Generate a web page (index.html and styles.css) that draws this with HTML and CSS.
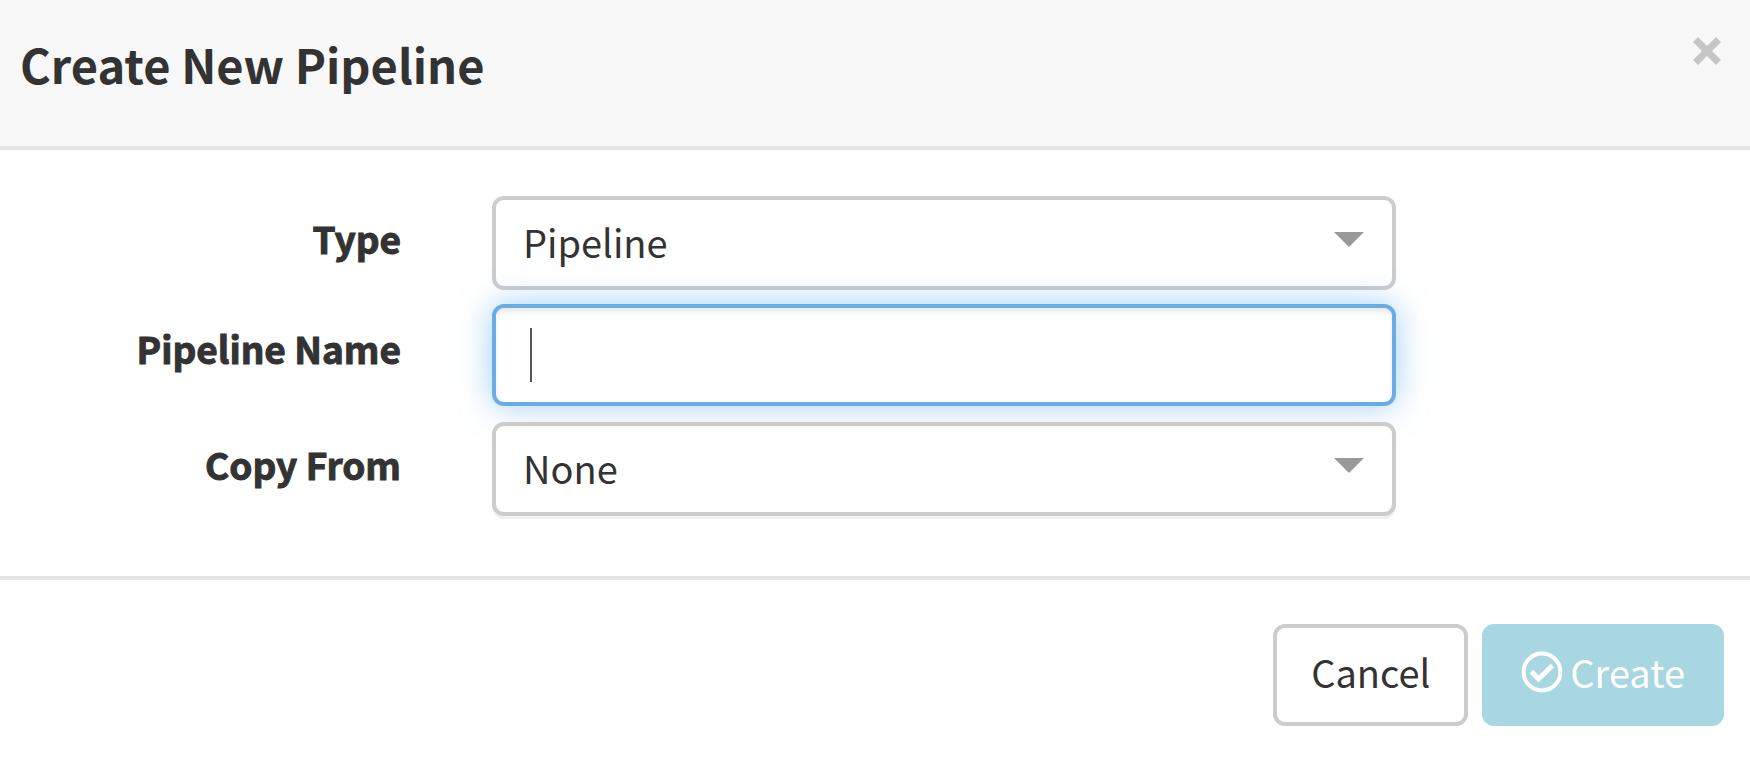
FILE: index.html
```
<!DOCTYPE html>
<html lang="en">
<head>
<meta charset="utf-8">
<title>Create New Pipeline</title>
<link rel="stylesheet" href="styles.css">
</head>
<body>
<form class="modal">
  <header class="modal-header">
    <h1 class="modal-title">Create New Pipeline</h1>
    <button class="close" type="button" aria-label="Close">
      <svg class="close-icon" viewBox="0 0 28 28" aria-hidden="true"><path d="M5 0 14 9 23 0 28 5 19 14 28 23 23 28 14 19 5 28 0 23 9 14 0 5Z"/></svg>
    </button>
  </header>
  <div class="modal-body">
    <div class="row">
      <label class="label" for="type">Type</label>
      <div class="field">
        <select class="control select" id="type"><option>Pipeline</option></select>
        <svg class="arrow" viewBox="0 0 30 15" aria-hidden="true"><path d="M0 0H30L15 15Z"/></svg>
      </div>
    </div>
    <div class="row row-text">
      <label class="label" for="name">Pipeline Name</label>
      <div class="field">
        <input class="control input" id="name" type="text">
      </div>
    </div>
    <div class="row">
      <label class="label" for="copy">Copy From</label>
      <div class="field">
        <select class="control select raised" id="copy"><option>None</option></select>
        <svg class="arrow" viewBox="0 0 30 15" aria-hidden="true"><path d="M0 0H30L15 15Z"/></svg>
      </div>
    </div>
  </div>
  <footer class="modal-footer">
    <button class="btn" type="button">Cancel</button>
    <button class="btn btn-primary" type="submit" disabled>
      <svg class="check" viewBox="0 0 42 42" aria-hidden="true"><circle cx="21" cy="21" r="18.4"/><path d="m10.500 20.500 7 7.500 14-13.500"/></svg>
      <span>Create</span>
    </button>
  </footer>
</form>
</body>
</html>
```

FILE: styles.css
```
* {
  box-sizing: border-box;
}

body {
  margin: 0;
  background: #fff;
  color: #333;
  font-family: "Noto Sans CJK SC", "Noto Sans", sans-serif;
  font-size: 38px;
  line-height: 54px;
}

button,
input,
select {
  font: inherit;
  color: inherit;
}

.modal-header {
  display: flex;
  justify-content: space-between;
  align-items: flex-start;
  padding: 30px 29px 48px 20px;
  background: #f8f8f8;
  border-bottom: 4px solid #e5e5e5;
}

.modal-title {
  margin: 0;
  font-size: 47px;
  font-weight: 600;
  line-height: 68px;
}

.close {
  display: flex;
  margin-top: 7px;
  padding: 0;
  border: 0;
  background: none;
}

.close-icon {
  width: 28px;
  height: 28px;
  fill: #c6c6c6;
}

.modal-body {
  display: flex;
  flex-direction: column;
  gap: 14px;
  padding: 46px 0 60px;
}

.row {
  display: grid;
  grid-template-columns: 492fr 904fr 354fr;
  align-items: center;
}

.row-text {
  padding-bottom: 2px;
}

.label {
  padding: 0 91px 10px 0;
  font-size: 37px;
  font-weight: 700;
  text-align: right;
  -webkit-text-stroke: 1px #333;
}

.row-text .label {
  padding-bottom: 14px;
}

.field {
  position: relative;
}

.control {
  display: block;
  width: 100%;
  height: 94px;
  padding: 0 27px 2px;
  border: 4px solid #ccc;
  border-radius: 12px;
  background: #fff;
  outline: 0;
}

.select {
  appearance: none;
}

.raised {
  box-shadow: 0 3px 0 #efefef;
}

.arrow {
  position: absolute;
  top: 36px;
  right: 32px;
  width: 30px;
  height: 15px;
  fill: #999;
  pointer-events: none;
}

/* Focused text box, with its insertion bar at the start of the text */
.input {
  position: relative;
  height: 102px;
  padding: 0 34px;
  border-color: #6aade4;
  background: linear-gradient(#555, #555) 34px 20px / 2px 54px no-repeat #fff;
  box-shadow: inset 0 4px 4px rgba(0, 0, 0, 0.08), 0 0 32px rgba(102, 175, 233, 0.6);
  caret-color: transparent;
}

.modal-footer {
  display: flex;
  justify-content: flex-end;
  gap: 14px;
  padding: 44px 26px 32px;
  border-top: 4px solid #e5e5e5;
}

.btn {
  display: flex;
  align-items: center;
  gap: 7px;
  height: 102px;
  padding: 0 34px 6px;
  border: 4px solid #ccc;
  border-radius: 12px;
  background: #fff;
}

.btn-primary {
  padding: 0 35px 6px;
  border-color: #a8d6e1;
  background: #a8d6e1;
  color: #fff;
}

.check {
  width: 42px;
  height: 42px;
  fill: none;
  stroke: #fff;
  stroke-width: 4;
}

.check path {
  stroke-width: 5;
}
```
